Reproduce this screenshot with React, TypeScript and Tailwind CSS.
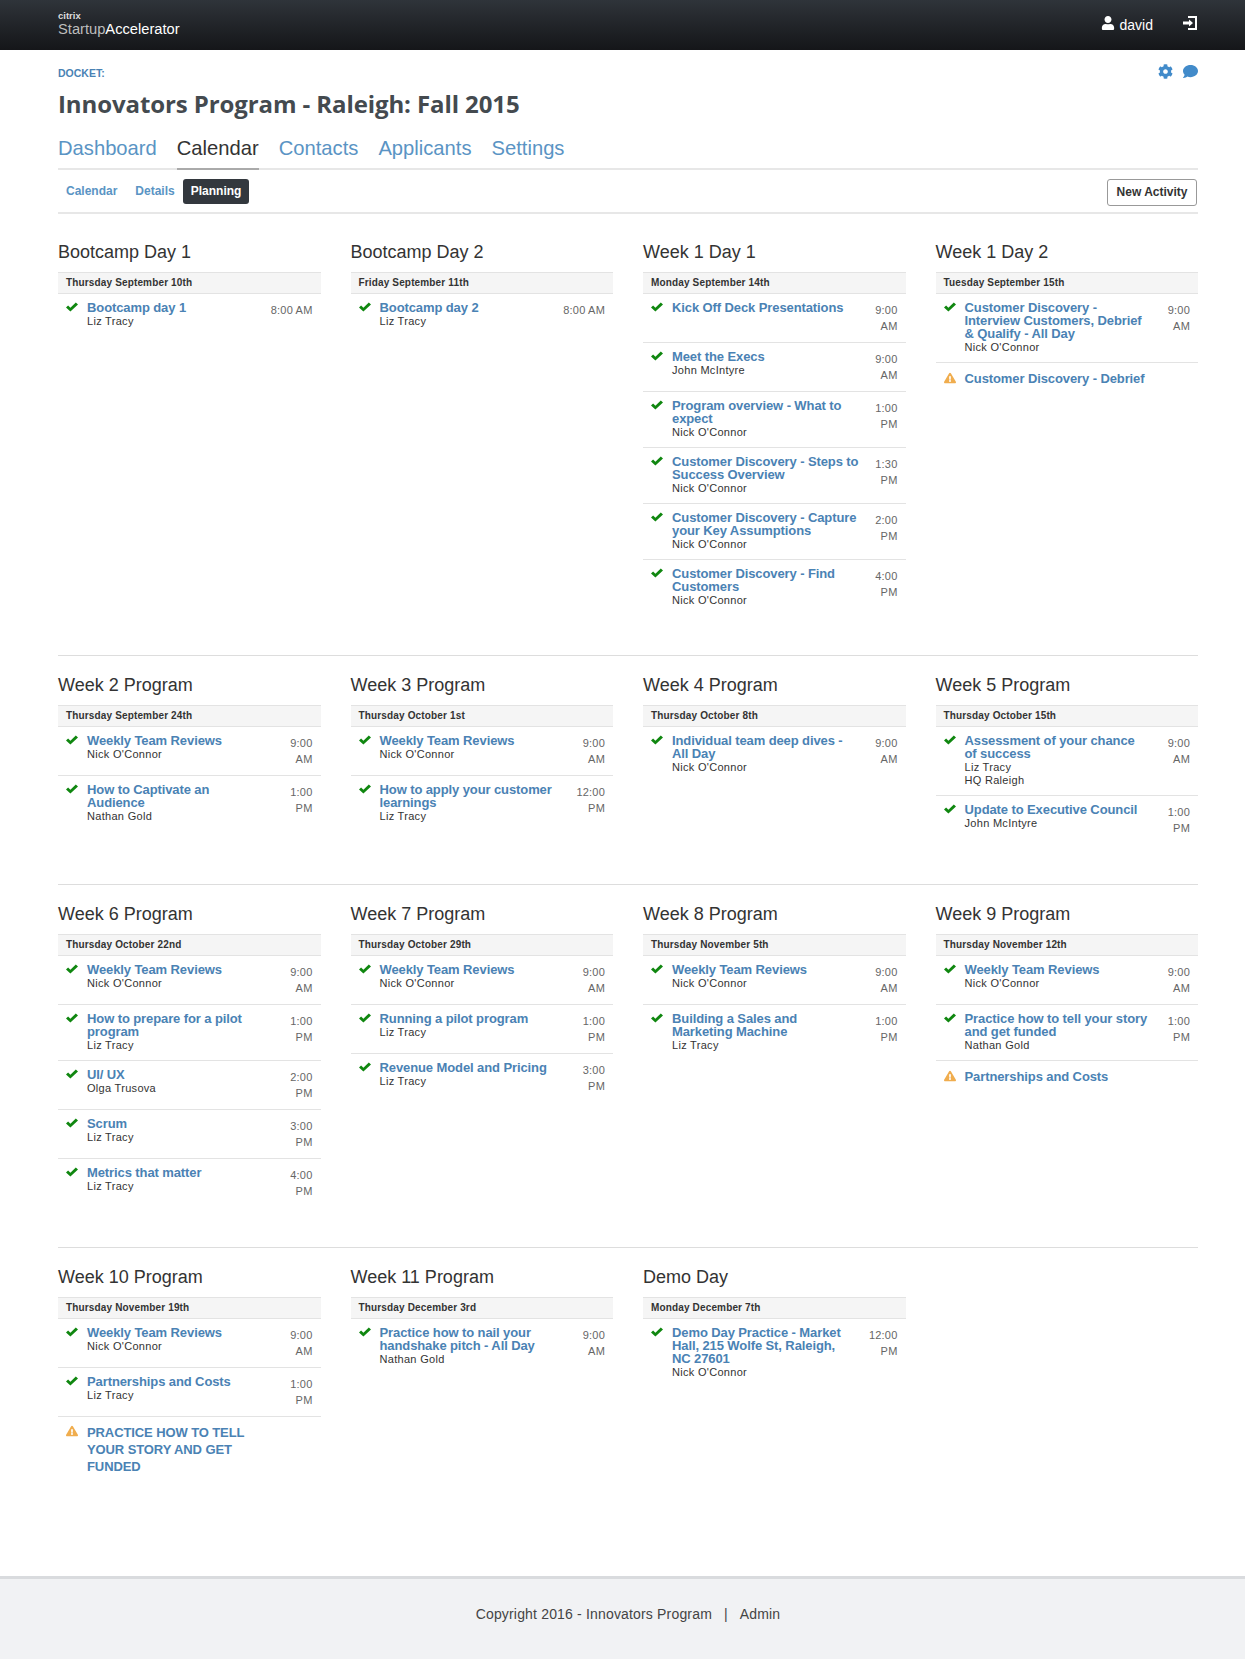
import React from "react";
import { FaExclamationTriangle, FaUser, FaCog, FaComment } from "react-icons/fa";

type Item = { t: string; p?: string; p2?: string; time?: [string, string?]; warn?: boolean; caps?: boolean };
type Col = { h: string; d: string; items: Item[] };

const NO = "Nick O'Connor", LT = "Liz Tracy", NG = "Nathan Gold", JM = "John McIntyre";

const sections: Col[][] = [
  [
    { h: "Bootcamp Day 1", d: "Thursday September 10th", items: [{ t: "Bootcamp day 1", p: LT, time: ["8:00 AM"] }] },
    { h: "Bootcamp Day 2", d: "Friday September 11th", items: [{ t: "Bootcamp day 2", p: LT, time: ["8:00 AM"] }] },
    { h: "Week 1 Day 1", d: "Monday September 14th", items: [
      { t: "Kick Off Deck Presentations", time: ["9:00", "AM"] },
      { t: "Meet the Execs", p: JM, time: ["9:00", "AM"] },
      { t: "Program overview - What to expect", p: NO, time: ["1:00", "PM"] },
      { t: "Customer Discovery - Steps to Success Overview", p: NO, time: ["1:30", "PM"] },
      { t: "Customer Discovery - Capture your Key Assumptions", p: NO, time: ["2:00", "PM"] },
      { t: "Customer Discovery - Find Customers", p: NO, time: ["4:00", "PM"] },
    ] },
    { h: "Week 1 Day 2", d: "Tuesday September 15th", items: [
      { t: "Customer Discovery - Interview Customers, Debrief & Qualify - All Day", p: NO, time: ["9:00", "AM"] },
      { t: "Customer Discovery - Debrief", warn: true },
    ] },
  ],
  [
    { h: "Week 2 Program", d: "Thursday September 24th", items: [
      { t: "Weekly Team Reviews", p: NO, time: ["9:00", "AM"] },
      { t: "How to Captivate an\nAudience", p: NG, time: ["1:00", "PM"] },
    ] },
    { h: "Week 3 Program", d: "Thursday October 1st", items: [
      { t: "Weekly Team Reviews", p: NO, time: ["9:00", "AM"] },
      { t: "How to apply your customer learnings", p: LT, time: ["12:00", "PM"] },
    ] },
    { h: "Week 4 Program", d: "Thursday October 8th", items: [
      { t: "Individual team deep dives - All Day", p: NO, time: ["9:00", "AM"] },
    ] },
    { h: "Week 5 Program", d: "Thursday October 15th", items: [
      { t: "Assessment of your chance\nof success", p: LT, p2: "HQ Raleigh", time: ["9:00", "AM"] },
      { t: "Update to Executive Council", p: JM, time: ["1:00", "PM"] },
    ] },
  ],
  [
    { h: "Week 6 Program", d: "Thursday October 22nd", items: [
      { t: "Weekly Team Reviews", p: NO, time: ["9:00", "AM"] },
      { t: "How to prepare for a pilot program", p: LT, time: ["1:00", "PM"] },
      { t: "UI/ UX", p: "Olga Trusova", time: ["2:00", "PM"] },
      { t: "Scrum", p: LT, time: ["3:00", "PM"] },
      { t: "Metrics that matter", p: LT, time: ["4:00", "PM"] },
    ] },
    { h: "Week 7 Program", d: "Thursday October 29th", items: [
      { t: "Weekly Team Reviews", p: NO, time: ["9:00", "AM"] },
      { t: "Running a pilot program", p: LT, time: ["1:00", "PM"] },
      { t: "Revenue Model and Pricing", p: LT, time: ["3:00", "PM"] },
    ] },
    { h: "Week 8 Program", d: "Thursday November 5th", items: [
      { t: "Weekly Team Reviews", p: NO, time: ["9:00", "AM"] },
      { t: "Building a Sales and Marketing Machine", p: LT, time: ["1:00", "PM"] },
    ] },
    { h: "Week 9 Program", d: "Thursday November 12th", items: [
      { t: "Weekly Team Reviews", p: NO, time: ["9:00", "AM"] },
      { t: "Practice how to tell your story and get funded", p: NG, time: ["1:00", "PM"] },
      { t: "Partnerships and Costs", warn: true },
    ] },
  ],
  [
    { h: "Week 10 Program", d: "Thursday November 19th", items: [
      { t: "Weekly Team Reviews", p: NO, time: ["9:00", "AM"] },
      { t: "Partnerships and Costs", p: LT, time: ["1:00", "PM"] },
      { t: "PRACTICE HOW TO TELL\nYOUR STORY AND GET\nFUNDED", warn: true, caps: true },
    ] },
    { h: "Week 11 Program", d: "Thursday December 3rd", items: [
      { t: "Practice how to nail your handshake pitch - All Day", p: NG, time: ["9:00", "AM"] },
    ] },
    { h: "Demo Day", d: "Monday December 7th", items: [
      { t: "Demo Day Practice - Market\nHall, 215 Wolfe St, Raleigh,\nNC 27601", p: NO, time: ["12:00", "PM"] },
    ] },
  ],
];

function Check() {
  return (
    <svg width="12" height="10" viewBox="0 0 12 10" fill="#108710" className="mt-[1px]">
      <path d="M0 5.6 2.1 3.6 4.4 5.7 9.8.4 12 2.5 4.4 9.6Z" />
    </svg>
  );
}

function Row({ it, first }: { it: Item; first: boolean }) {
  return (
    <div className={`flex pl-2 pr-2 ${first ? "" : "border-t border-[#e3e3e3]"} ${it.warn ? (it.caps ? "pt-[7px] pb-[3px]" : "pt-[8px] pb-[6px]") : "pt-[7px] pb-[9px]"}`}>
      <div className="w-[21px] shrink-0">
        {it.warn ? <FaExclamationTriangle className="text-[#f0ad4e] text-[12px] mt-[1px]" /> : <Check />}
      </div>
      <div className="min-w-0 flex-1">
        <div className={`font-bold whitespace-pre-line text-[#4a82b4] text-[13px] tracking-[-0.1px] ${it.caps ? "leading-[17px]" : it.warn ? "leading-[16px]" : "leading-[13px]"}`}>{it.t}</div>
        {it.p && <div className="text-[11px] leading-[13px] text-[#333] tracking-[0.3px] mt-[1px] -mb-[1px]">{it.p}</div>}
        {it.p2 && <div className="text-[11px] leading-[13px] text-[#333] tracking-[0.3px] mt-[1px] -mb-[1px]">{it.p2}</div>}
      </div>
      {it.time && (
        <div className={`shrink-0 text-right text-[11px] leading-[16px] text-[#666] tracking-[0.2px] ${it.time[1] ? "w-[37px] h-[32px]" : "whitespace-nowrap"} mt-[1px] -mb-[1px]`}>
          <div>{it.time[0]}</div>
          {it.time[1] && <div>{it.time[1]}</div>}
        </div>
      )}
    </div>
  );
}

function Column({ c }: { c: Col }) {
  return (
    <div>
      <h3 className="text-[18px] leading-[20px] text-[#333] mb-[10px]">{c.h}</h3>
      <div className="h-[22px] bg-[#f5f5f5] border-y border-[#e3e3e3] px-2 text-[10px] font-bold leading-[20px] tracking-[0.15px] text-[#333]">{c.d}</div>
      {c.items.map((it, i) => <Row key={i} it={it} first={i === 0} />)}
    </div>
  );
}

function LogIn() {
  return (
    <svg width="16" height="16" viewBox="0 0 16 16" fill="#fff">
      <path d="M6 1h9v14H6v-2h7V3H6z" />
      <path d="M7 4.5 11 8l-4 3.5V9.4H1V6.6h6z" />
    </svg>
  );
}

export default function App() {
  return (
    <div className="min-h-[1659px] flex flex-col bg-white font-['Liberation_Sans',Arial,sans-serif] text-[#333]">
      <header className="h-[50px] bg-gradient-to-b from-[#2f343a] to-[#151619] flex justify-between pl-[58px] pr-[47px]">
        <div className="pt-[12px]">
          <div className="text-[9.5px] leading-[8px] font-bold text-[#ddd]">citrix</div>
          <div className="text-[14.7px] leading-[17px] mt-[1px] text-[#bdbdbd]">Startup<span className="text-white">Accelerator</span></div>
        </div>
        <div className="flex items-start pt-[15px] text-white">
          <FaUser className="text-[14px] mt-[1px] mr-[5px]" />
          <span className="text-[14px] leading-[20px]">david</span>
          <span className="ml-[29px]"><LogIn /></span>
        </div>
      </header>

      <main className="flex-1 pl-[58px] pr-[47px]">
        <div className="flex justify-between pt-[16px]">
          <div className="text-[10.5px] font-bold leading-[14px] text-[#4a82b4]">DOCKET:</div>
          <div className="flex gap-[10px] text-[#428bca] text-[15px] -mt-[2px]">
            <FaCog /><FaComment />
          </div>
        </div>
        <h1 className="text-[24px] leading-[30px] font-bold text-[#444a4f] mt-[9px] font-['Open_Sans',sans-serif] tracking-[-0.1px]">Innovators Program - Raleigh: Fall 2015</h1>
        <nav className="flex gap-[20px] mt-[15px] border-b-2 border-[#e7e7e7] h-[36px] text-[20.2px] leading-[28px] text-[#5a94c4]">
          <span>Dashboard</span>
          <span className="text-[#333] border-b-2 border-[#aaa] h-[36px]">Calendar</span>
          <span>Contacts</span>
          <span>Applicants</span>
          <span>Settings</span>
        </nav>
        <div className="flex items-center justify-between h-[44px] border-b-2 border-[#e7e7e7] text-[12px] font-bold">
          <div className="flex items-center">
            <span className="px-[8px] text-[#5a94c4]">Calendar</span>
            <span className="px-[8px] ml-[2px] text-[#5a94c4]">Details</span>
            <span className="px-[8px] h-[25px] leading-[25px] bg-[#33383e] text-white rounded-[3px]">Planning</span>
          </div>
          <span className="h-[27px] leading-[25px] px-[8.5px] mr-[1px] border border-[#999] rounded-[3px] text-[#333] mt-[2px]">New Activity</span>
        </div>

        {sections.map((s, i) => (
          <div key={i} className={`grid grid-cols-4 gap-x-[30px] ${i === 0 ? "pt-[28px]" : "pt-[19px]"} ${i < 3 ? "border-b border-[#ddd]" : ""} ${i < 3 ? "pb-[40px]" : ""}`}>
            {s.map((c, j) => <Column key={j} c={c} />)}
          </div>
        ))}
      </main>

      <footer className="h-[83px] bg-[#f1f2f4] border-t-[3px] border-[#d9dbde] flex items-start justify-center pt-[25px] pl-[11px] text-[14px] leading-[20px] tracking-[0.17px] text-[#444]">
        <span>Copyright 2016 - Innovators Program</span>
        <span className="mx-[12px]">|</span>
        <span>Admin</span>
      </footer>
    </div>
  );
}
